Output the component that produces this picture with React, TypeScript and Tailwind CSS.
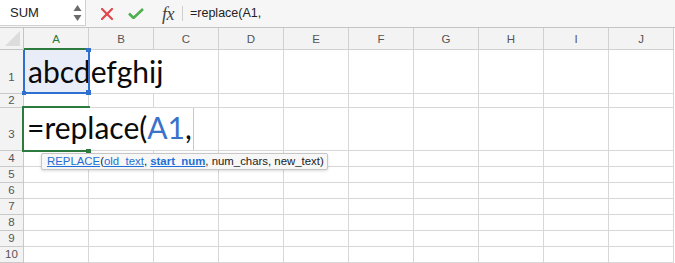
import React from "react";

const cols = ["A", "B", "C", "D", "E", "F", "G", "H", "I", "J"];
const grid = "border-r border-b border-[#d7d7d7]";
const rowHdr =
  "bg-[#f3f3f3] border-r border-b border-[#c9c9c9] flex justify-center text-[11.5px] text-[#555] font-['Liberation_Sans',sans-serif]";

function EmptyCells({ from }: { from: number }) {
  return (
    <>
      {cols.slice(from).map((c) => (
        <div key={c} className={grid} />
      ))}
    </>
  );
}

export default function App() {
  return (
    <div className="relative w-[675px] h-[263px] overflow-hidden bg-white font-['Liberation_Sans',sans-serif]">
      {/* A1 reference highlight fill (behind text) */}
      <div className="absolute left-[24px] top-[50px] w-[65px] h-[43px] bg-[#e8edf8]" />

      {/* Toolbar */}
      <div className="flex h-[28px] items-start border-b border-[#c4c4c4] bg-[#f6f6f6]">
        <div className="relative flex h-[26px] w-[86px] items-center border-r border-b border-[#d0d0d0] bg-white pl-[10px] text-[13px] text-[#222]">
          SUM
          <svg className="absolute left-[73px] top-[4px]" width="9" height="18" viewBox="0 0 9 18">
            <polygon points="4.5,1 8.5,7 0.5,7" fill="#6b6b6b" />
            <polygon points="0.5,11 8.5,11 4.5,17" fill="#6b6b6b" />
          </svg>
        </div>
        <div className="flex h-[27px] items-center">
          <svg className="ml-[15px]" width="12" height="12" viewBox="0 0 12 12">
            <path d="M1 1 L11 11 M11 1 L1 11" stroke="#e0474c" strokeWidth="2.2" strokeLinecap="square" />
          </svg>
          <svg className="ml-[15px]" width="16" height="11" viewBox="0 0 16 11">
            <path d="M1 5.5 L5.5 10 L15 1" stroke="#4fae4f" strokeWidth="2.6" fill="none" />
          </svg>
          <span className="ml-[18px] font-['Liberation_Serif',serif] text-[18px] italic leading-none text-[#444] tracking-[-0.5px]">
            fx
          </span>
          <div className="ml-[8px] h-[15px] w-px bg-[#cfcfcf]" />
          <span className="ml-[7px] text-[12.5px] text-[#222]">=replace(A1,</span>
        </div>
      </div>

      {/* Grid */}
      <div className="grid grid-cols-[24px_repeat(10,65px)] grid-rows-[22px_44px_14px_43px_repeat(7,16px)]">
        {/* Header row */}
        <div className="relative border-r border-b border-[#c4c4c4] bg-[#f3f3f3]">
          <svg className="absolute left-[5px] top-[3px]" width="15" height="15" viewBox="0 0 15 15">
            <polygon points="15,0 15,15 0,15" fill="#dcdcdc" />
          </svg>
        </div>
        {cols.map((c) => (
          <div
            key={c}
            className={
              c === "A"
                ? "flex items-center justify-center border-r border-[#d0d0d0] bg-[#f3f3f3] pt-[2px] text-[11.5px] text-[#2a7a3f] shadow-[inset_0_-2px_0_#2d7a3e]"
                : "flex items-center justify-center border-r border-b border-[#d0d0d0] bg-[#f3f3f3] pt-[2px] text-[11.5px] text-[#555]"
            }
          >
            {c}
          </div>
        ))}

        {/* Row 1 */}
        <div className={`${rowHdr} items-end pb-[7px]`}>1</div>
        <div className="relative col-span-2 border-b border-[#d7d7d7]">
          <span className="relative block whitespace-nowrap pl-[4px] pt-[3px] font-['Lato',sans-serif] text-[30px] leading-[36px] text-[#0a0a0a]">
            abcdefghij
          </span>
        </div>
        <EmptyCells from={2} />

        {/* Row 2 */}
        <div className={`${rowHdr} items-center`}>2</div>
        <EmptyCells from={0} />

        {/* Row 3 */}
        <div className={`${rowHdr} items-end pb-[7px] text-[#2a7a3f]`}>3</div>
        <EmptyCells from={0} />

        {/* Rows 4-10 */}
        {[4, 5, 6, 7, 8, 9, 10].map((r) => (
          <React.Fragment key={r}>
            <div className={`${rowHdr} items-center`}>{r}</div>
            <EmptyCells from={0} />
          </React.Fragment>
        ))}
      </div>

      {/* A1 reference highlight border + handles */}
      <div className="absolute left-[23px] top-[50px] h-[44px] w-[67px] border-2 border-t-0 border-[#2f6fd0]" />
      <div className="absolute left-[86px] top-[48px] h-[4px] w-[5px] bg-[#2f6fd0]" />
      <div className="absolute left-[22px] top-[91px] h-[4px] w-[4px] bg-[#2f6fd0]" />
      <div className="absolute left-[86px] top-[90px] h-[5px] w-[5px] bg-[#2f6fd0]" />

      {/* In-cell editor for A3 */}
      <div className="absolute left-[24px] top-[108px] h-[42px] w-[170px] border-r border-[#c8c8c8] bg-white">
        <span className="block whitespace-nowrap pl-[3px] pt-[1px] font-['Lato',sans-serif] text-[30px] leading-[36px] text-[#0a0a0a]">
          =replace(<span className="text-[#3a72c9]">A1</span>,
        </span>
      </div>
      {/* Active cell green border */}
      <div className="absolute left-[22px] top-[106px] h-[2px] w-[68px] bg-[#2d7a3e]" />
      <div className="absolute left-[22px] top-[106px] h-[46px] w-[2px] bg-[#2d7a3e]" />
      <div className="absolute left-[22px] top-[150px] h-[2px] w-[64px] bg-[#2d7a3e]" />
      <div className="absolute left-[86px] top-[149px] h-[5px] w-[5px] bg-[#2d7a3e]" />

      {/* Function tooltip */}
      <div className="absolute left-[41px] top-[153px] h-[17px] w-[287px] whitespace-nowrap rounded-[2px] border border-[#c6c6c6] bg-[#f7f7f7] pl-[5px] text-[11.4px] leading-[15px] text-[#222] shadow-[0_1px_3px_rgba(0,0,0,0.15)]">
        <span className="text-[#1f6fd6] underline">REPLACE</span>(<span className="text-[#1f6fd6] underline">old_text</span>, <span className="font-bold text-[#1f6fd6] underline">start_num</span>, num_chars, new_text)
      </div>
    </div>
  );
}
